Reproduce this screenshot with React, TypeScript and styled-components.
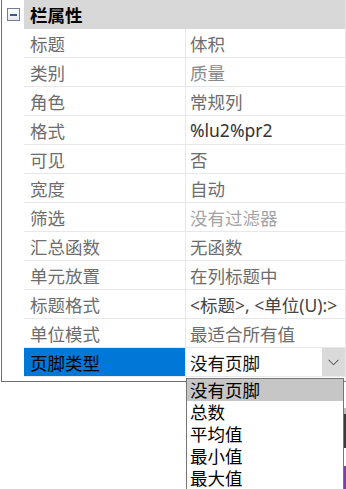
import React from "react";
import styled, { createGlobalStyle } from "styled-components";

const Global = createGlobalStyle`
  html, body { margin: 0; padding: 0; background: #ffffff; }
  body { font-family: "Noto Sans", "Noto Sans CJK SC", sans-serif; width: 346px; height: 489px; overflow: hidden; }
`;

const Page = styled.div`
  position: relative;
  width: 346px;
  height: 489px;
`;

const Frame = styled.div`
  margin-left: 1px;
  width: 343px;
  border-left: 1px solid #6f6f6f;
  border-bottom: 1px solid #6f6f6f;
  border-right: 1px solid #e4e4e4;
  padding-bottom: 4px;
`;

const Row = styled.div`
  display: grid;
  grid-template-columns: 22px 162px minmax(0, 1fr);
  height: 29px;
`;

const Gutter = styled.div`
  display: flex;
  align-items: center;
  justify-content: center;
  padding-left: 1px;
`;

const Toggle = styled.div`
  width: 11px;
  height: 11px;
  border: 1px solid #6e7f96;
  background: linear-gradient(#fdfdfd, #e6e9ee);
  display: flex;
  align-items: center;
  justify-content: center;
  &::after {
    content: "";
    width: 7px;
    height: 2px;
    background: #3b5a8a;
  }
`;

const HeaderCell = styled.div`
  grid-column: 2 / 4;
  background: #d8d8d8;
  display: flex;
  align-items: center;
  padding-left: 6px;
  font-family: "Noto Sans CJK SC", sans-serif;
  font-weight: 700;
  font-size: 17.5px;
  color: #000;
`;

const Cell = styled.div<{ $tone?: string; $selected?: boolean; $value?: boolean }>`
  display: flex;
  align-items: center;
  box-sizing: border-box;
  height: 29px;
  padding-left: ${(p) => (p.$value ? "4px" : "6px")};
  border-bottom: 1px solid #e8e8e8;
  border-right: ${(p) => (p.$value ? "none" : "1px solid #e8e8e8")};
  background: ${(p) => (p.$selected ? "#0078d7" : "#fff")};
  color: ${(p) => p.$tone || "#6d6d6d"};
  font-size: 17.5px;
  white-space: nowrap;
  overflow: hidden;
`;

const Combo = styled.div`
  display: flex;
  height: 29px;
  border-bottom: 1px solid #e8e8e8;
  box-sizing: border-box;
`;

const ComboText = styled.div`
  flex: 1;
  display: flex;
  align-items: center;
  padding-left: 4px;
  font-size: 17.5px;
  color: #111;
  background: #fff;
`;

const ComboButton = styled.div`
  width: 23px;
  background: #dadada;
  display: flex;
  align-items: center;
  justify-content: center;
`;

const List = styled.div`
  position: absolute;
  left: 186px;
  top: 378px;
  width: 156px;
  border: 1px solid #767676;
  border-bottom: none;
  background: #fff;
  padding-bottom: 2px;
`;

const Item = styled.div<{ $active?: boolean }>`
  height: 21.8px;
  display: flex;
  align-items: center;
  padding-left: 3px;
  font-size: 17.5px;
  color: #000;
  background: ${(p) => (p.$active ? "#c6c6c6" : "#fff")};
`;

const EdgeMark = styled.div<{ $top: number; $h: number; $c: string }>`
  position: absolute;
  right: 0;
  width: 2px;
  top: ${(p) => p.$top}px;
  height: ${(p) => p.$h}px;
  background: ${(p) => p.$c};
`;

type R = { label: string; value: string; tone?: string };

const rows: R[] = [
  { label: "标题", value: "体积", tone: "#6d6d6d" },
  { label: "类别", value: "质量", tone: "#8a8a8a" },
  { label: "角色", value: "常规列", tone: "#6d6d6d" },
  { label: "格式", value: "%lu2%pr2", tone: "#333333" },
  { label: "可见", value: "否", tone: "#6d6d6d" },
  { label: "宽度", value: "自动", tone: "#6d6d6d" },
  { label: "筛选", value: "没有过滤器", tone: "#a3a3a3" },
  { label: "汇总函数", value: "无函数", tone: "#6d6d6d" },
  { label: "单元放置", value: "在列标题中", tone: "#6d6d6d" },
  { label: "标题格式", value: "<标题>, <单位(U):>", tone: "#444444" },
  { label: "单位模式", value: "最适合所有值", tone: "#6d6d6d" },
];

const options = ["没有页脚", "总数", "平均值", "最小值", "最大值"];

export default function App() {
  return (
    <Page>
      <Global />
      <Frame>
        <Row>
          <Gutter>
            <Toggle />
          </Gutter>
          <HeaderCell>栏属性</HeaderCell>
        </Row>
        {rows.map((r) => (
          <Row key={r.label}>
            <Gutter />
            <Cell>{r.label}</Cell>
            <Cell $value $tone={r.tone}>
              {r.value}
            </Cell>
          </Row>
        ))}
        <Row>
          <Gutter />
          <Cell $selected $tone="#000">页脚类型</Cell>
          <Combo>
            <ComboText>没有页脚</ComboText>
            <ComboButton>
              <svg width="11" height="7" viewBox="0 0 11 7">
                <path d="M0.5 0.8 L5.5 5.8 L10.5 0.8" fill="none" stroke="#333" strokeWidth="1" />
              </svg>
            </ComboButton>
          </Combo>
        </Row>
      </Frame>
      <List>
        {options.map((o, i) => (
          <Item key={o} $active={i === 0}>
            {o}
          </Item>
        ))}
      </List>
      <EdgeMark $top={408} $h={6} $c="#bdbdbd" />
      <EdgeMark $top={414} $h={34} $c="#3a3a3a" />
      <EdgeMark $top={466} $h={23} $c="#7a3fa8" />
    </Page>
  );
}
